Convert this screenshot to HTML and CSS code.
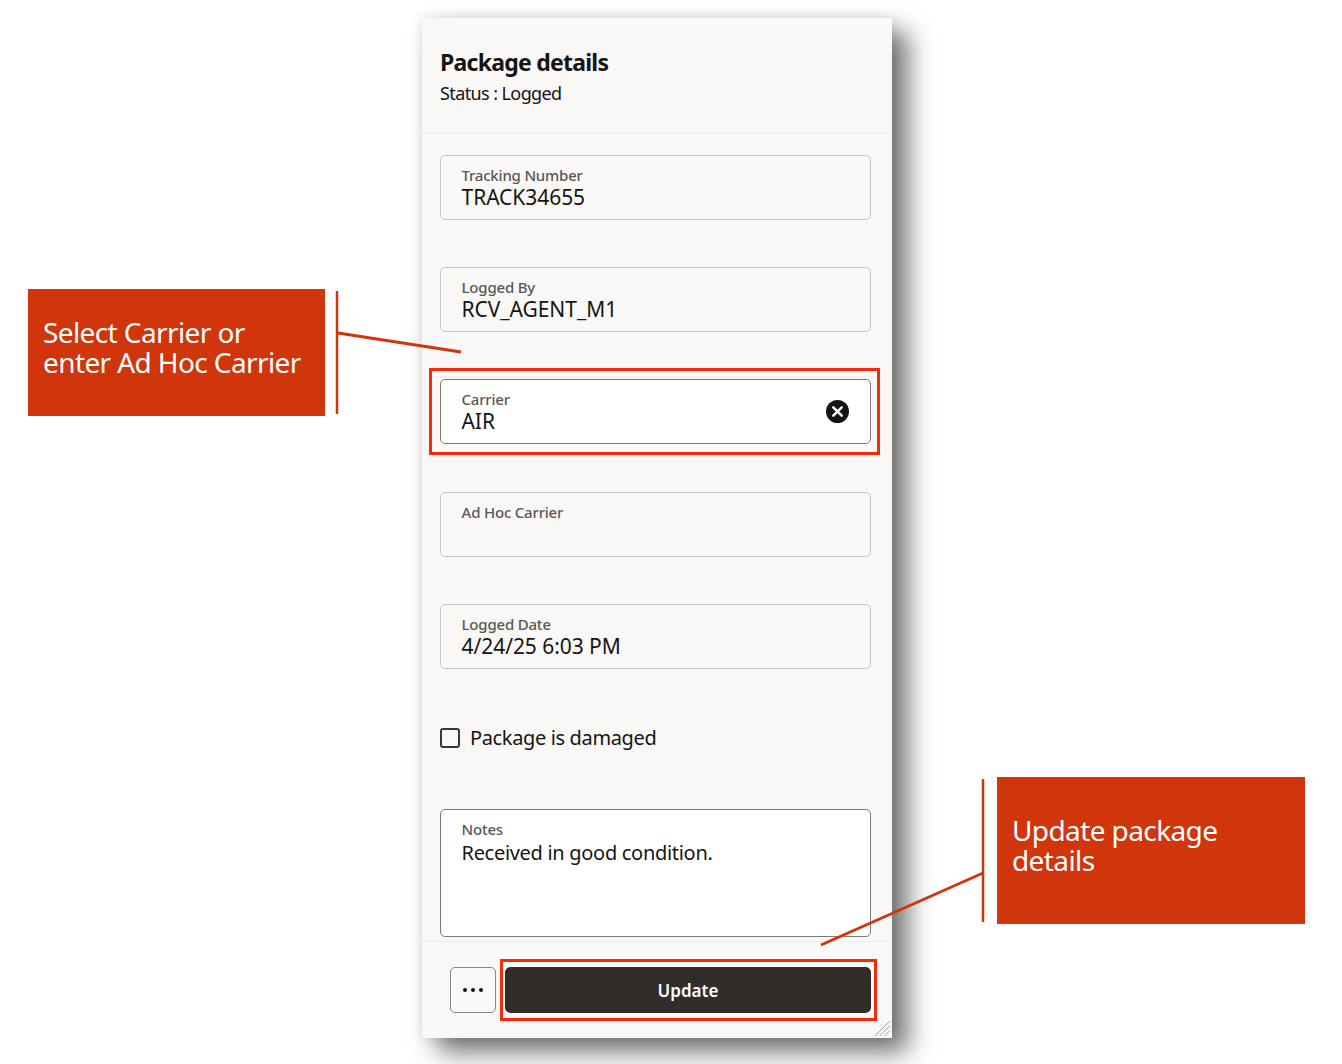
FILE: index.html
```html
<!DOCTYPE html>
<html lang="en">
<head>
<meta charset="utf-8">
<title>Package details</title>
<link rel="stylesheet" href="styles.css">
</head>
<body>
<main class="panel">
  <header class="panel-header">
    <h1 class="panel-title">Package details</h1>
    <p class="panel-status">Status : Logged</p>
  </header>
  <div class="panel-body">
    <div class="field"><span class="field-label">Tracking Number</span><span class="field-value">TRACK34655</span></div>
    <div class="field"><span class="field-label">Logged By</span><span class="field-value">RCV_AGENT_M1</span></div>
    <div class="field field-editable">
      <span class="field-label">Carrier</span><span class="field-value">AIR</span>
      <svg class="clear-icon" viewBox="0 0 24 24" aria-hidden="true"><circle cx="12" cy="12" r="12" fill="#161513"/><path d="M7.6 7.6l8.8 8.8M16.4 7.6l-8.8 8.8" stroke="#fff" stroke-width="2.6" stroke-linecap="round"/></svg>
    </div>
    <div class="field"><span class="field-label">Ad Hoc Carrier</span></div>
    <div class="field"><span class="field-label">Logged Date</span><span class="field-value">4/24/25 6:03 PM</span></div>
    <label class="check-row"><span class="check-box"></span><span class="check-text">Package is damaged</span></label>
    <div class="field field-editable field-notes"><span class="field-label">Notes</span><span class="field-value field-value-text">Received in good condition.</span></div>
  </div>
  <footer class="panel-footer">
    <button class="more-button" type="button" aria-label="More"><span class="dot"></span><span class="dot"></span><span class="dot"></span></button>
    <button class="update-button" type="button">Update</button>
  </footer>
  <svg class="resize-grip" viewBox="0 0 18 18" aria-hidden="true"><path d="M17 1L1 17M17 6L6 17M17 11L11 17" stroke="#9a9894" stroke-width="1"/></svg>
</main>

<div class="highlight highlight-carrier"></div>
<div class="highlight highlight-update"></div>

<aside class="callout callout-carrier">Select Carrier or<br>enter Ad Hoc Carrier</aside>
<aside class="callout callout-update">Update package<br>details</aside>

<svg class="leaders" viewBox="0 0 1342 1064" aria-hidden="true">
  <path d="M337 291V414M983 779V922" fill="none" stroke="#d0350c" stroke-width="2.5"/>
  <path d="M338 333L461 352M983 873L821 945" fill="none" stroke="#d0350c" stroke-width="3"/>
</svg>
</body>
</html>
```
FILE: styles.css
```css
* { box-sizing: border-box; }
html, body { margin: 0; height: 1064px; overflow: hidden; background: #fff; }
body { font-family: "Noto Sans", sans-serif; color: #161513; padding: 18px 0 0 422px; position: relative; }

.panel { position: relative; width: 470px; height: 1020px; background: #f9f8f6; display: flex; flex-direction: column; box-shadow: 16px 14px 24px rgba(0,0,0,.55), 0 0 12px rgba(0,0,0,.12); }
.panel-header { height: 116px; padding: 29px 18px 0; border-bottom: 1px solid #f0eeeb; }
.panel-title { margin: 0; font-size: 23px; line-height: 30px; font-weight: 700; letter-spacing: -.75px; }
.panel-status { margin: 4px 0 0; font-size: 18px; line-height: 24px; letter-spacing: -.6px; }

.panel-body { flex: 1; padding: 20.6px 21px 0 18px; display: flex; flex-direction: column; gap: 47.4px; overflow: hidden; }
.field { position: relative; height: 65px; flex: none; padding: 10px 20.5px 0; border: 1px solid #c9c7c3; border-radius: 5px; display: flex; flex-direction: column; }
.field-label { font-size: 15px; line-height: 19px; font-weight: 500; color: #5a5754; letter-spacing: -.2px; }
.field-value { font-size: 21px; line-height: 24px; letter-spacing: -.05px; }
.field-value-text { font-size: 20px; letter-spacing: -.3px; margin-top: 2px; }
.field-editable { background: #fff; border-color: #7d7a76; }
.field-notes { height: 128px; }
.clear-icon { position: absolute; right: 21px; top: 20px; width: 23px; height: 23px; }

.check-row { display: flex; align-items: center; gap: 10px; height: 24px; flex: none; margin: 9px 0 12px; }
.check-box { width: 20px; height: 20px; border: 2px solid #3a3835; border-radius: 3px; }
.check-text { font-size: 20px; line-height: 24px; letter-spacing: -.36px; }

.panel-footer { height: 97px; flex: none; border-top: 1px solid #f0eeeb; padding: 25px 21px 0 28px; display: flex; gap: 9px; }
.more-button { width: 46px; height: 46px; padding: 0; border: 1px solid #8b8884; border-radius: 5px; background: #f9f8f6; display: flex; align-items: center; justify-content: center; gap: 4px; }
.dot { width: 4px; height: 4px; border-radius: 50%; background: #161513; }
.update-button { flex: 1; height: 46px; border: 0; border-radius: 5px; background: #312d2a; color: #fff; font: 600 17px "Noto Sans", sans-serif; outline: 3px solid #fff; }
.resize-grip { position: absolute; right: 1px; bottom: 1px; width: 17px; height: 17px; }

.highlight { position: absolute; border: 3px solid #f62a0a; }
.highlight-carrier { left: 429px; top: 368px; width: 451px; height: 87px; }
.highlight-update { left: 500px; top: 959px; width: 377px; height: 62px; }

.callout { position: absolute; background: #d0350c; color: #fff; font-size: 28px; line-height: 30px; letter-spacing: -.6px; white-space: nowrap; }
.callout-carrier { left: 28px; top: 289px; width: 297px; height: 127px; padding: 28px 15px 0; }
.callout-update { left: 997px; top: 777px; width: 308px; height: 147px; padding: 38px 15px 0; }

.leaders { position: absolute; left: 0; top: 0; width: 1342px; height: 1064px; pointer-events: none; }
```
